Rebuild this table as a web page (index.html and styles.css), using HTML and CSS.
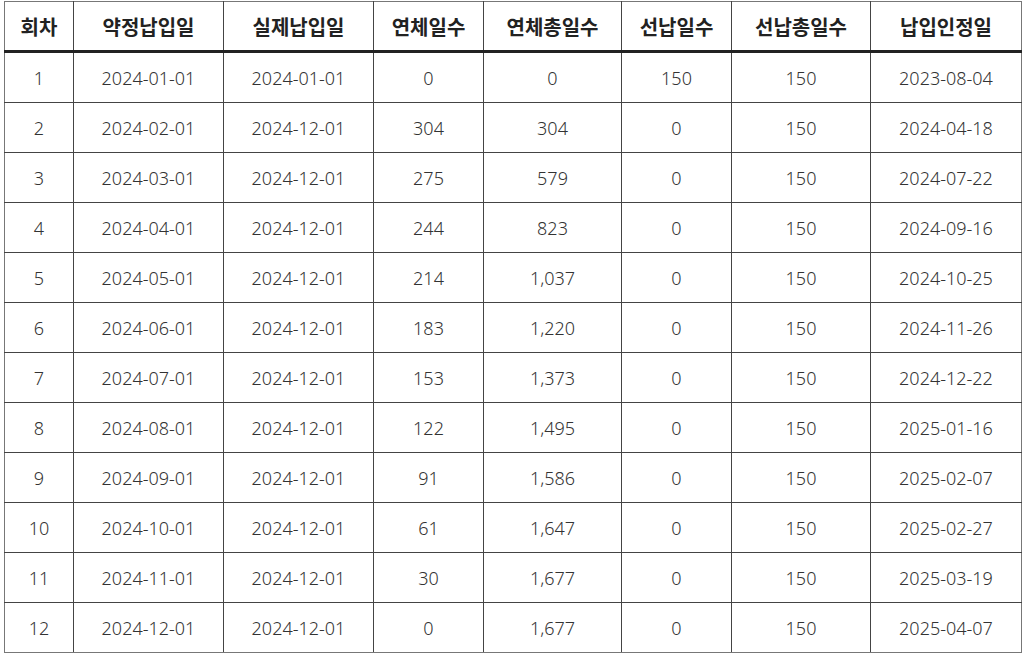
FILE: index.html
```html
<!DOCTYPE html>
<html lang="ko">
<head>
<meta charset="utf-8">
<link rel="stylesheet" href="styles.css">
</head>
<body>
<div class="wrap">
<table class="sched">
<colgroup>
<col class="c1"><col class="c2"><col class="c3"><col class="c4"><col class="c5"><col class="c6"><col class="c7"><col class="c8">
</colgroup>
<thead>
<tr><th>회차</th><th>약정납입일</th><th>실제납입일</th><th>연체일수</th><th>연체총일수</th><th>선납일수</th><th>선납총일수</th><th>납입인정일</th></tr>
</thead>
<tbody>
<tr><td>1</td><td>2024-01-01</td><td>2024-01-01</td><td>0</td><td>0</td><td>150</td><td>150</td><td>2023-08-04</td></tr>
<tr><td>2</td><td>2024-02-01</td><td>2024-12-01</td><td>304</td><td>304</td><td>0</td><td>150</td><td>2024-04-18</td></tr>
<tr><td>3</td><td>2024-03-01</td><td>2024-12-01</td><td>275</td><td>579</td><td>0</td><td>150</td><td>2024-07-22</td></tr>
<tr><td>4</td><td>2024-04-01</td><td>2024-12-01</td><td>244</td><td>823</td><td>0</td><td>150</td><td>2024-09-16</td></tr>
<tr><td>5</td><td>2024-05-01</td><td>2024-12-01</td><td>214</td><td>1,037</td><td>0</td><td>150</td><td>2024-10-25</td></tr>
<tr><td>6</td><td>2024-06-01</td><td>2024-12-01</td><td>183</td><td>1,220</td><td>0</td><td>150</td><td>2024-11-26</td></tr>
<tr><td>7</td><td>2024-07-01</td><td>2024-12-01</td><td>153</td><td>1,373</td><td>0</td><td>150</td><td>2024-12-22</td></tr>
<tr><td>8</td><td>2024-08-01</td><td>2024-12-01</td><td>122</td><td>1,495</td><td>0</td><td>150</td><td>2025-01-16</td></tr>
<tr><td>9</td><td>2024-09-01</td><td>2024-12-01</td><td>91</td><td>1,586</td><td>0</td><td>150</td><td>2025-02-07</td></tr>
<tr><td>10</td><td>2024-10-01</td><td>2024-12-01</td><td>61</td><td>1,647</td><td>0</td><td>150</td><td>2025-02-27</td></tr>
<tr><td>11</td><td>2024-11-01</td><td>2024-12-01</td><td>30</td><td>1,677</td><td>0</td><td>150</td><td>2025-03-19</td></tr>
<tr><td>12</td><td>2024-12-01</td><td>2024-12-01</td><td>0</td><td>1,677</td><td>0</td><td>150</td><td>2025-04-07</td></tr>
</tbody>
</table>
</div>
</body>
</html>
```
FILE: styles.css
```css
html, body { margin: 0; padding: 0; background: #fff; }
.wrap { padding: 1px 3px 0 4px; }
.sched {
  border-collapse: collapse;
  table-layout: fixed;
  width: 1017px;
  font-family: "Noto Sans CJK KR", "Noto Sans", sans-serif;
  font-size: 18px;
  color: #333;
  border: 1px solid #777;
}
.c1 { width: 69px; }
.c2 { width: 150px; }
.c3 { width: 150px; }
.c4 { width: 110px; }
.c5 { width: 138px; }
.c6 { width: 110px; }
.c7 { width: 139px; }
.c8 { width: 151px; }
.sched th, .sched td {
  border: 1px solid #444;
  text-align: center;
  padding: 0;
}
.sched th {
  height: 48px;
  font-size: 20px;
  font-weight: 700;
  color: #222;
  border-bottom: 3px solid #222;
}
.sched td {
  height: 49px;
  font-weight: 300;
  font-family: "Noto Sans", sans-serif;
}
.sched tr > :first-child { border-left-color: #777; }
.sched tr > :last-child { border-right-color: #777; }
.sched tbody tr:last-child td { border-bottom-color: #777; }
.sched thead th { border-top-color: #777; }
```
